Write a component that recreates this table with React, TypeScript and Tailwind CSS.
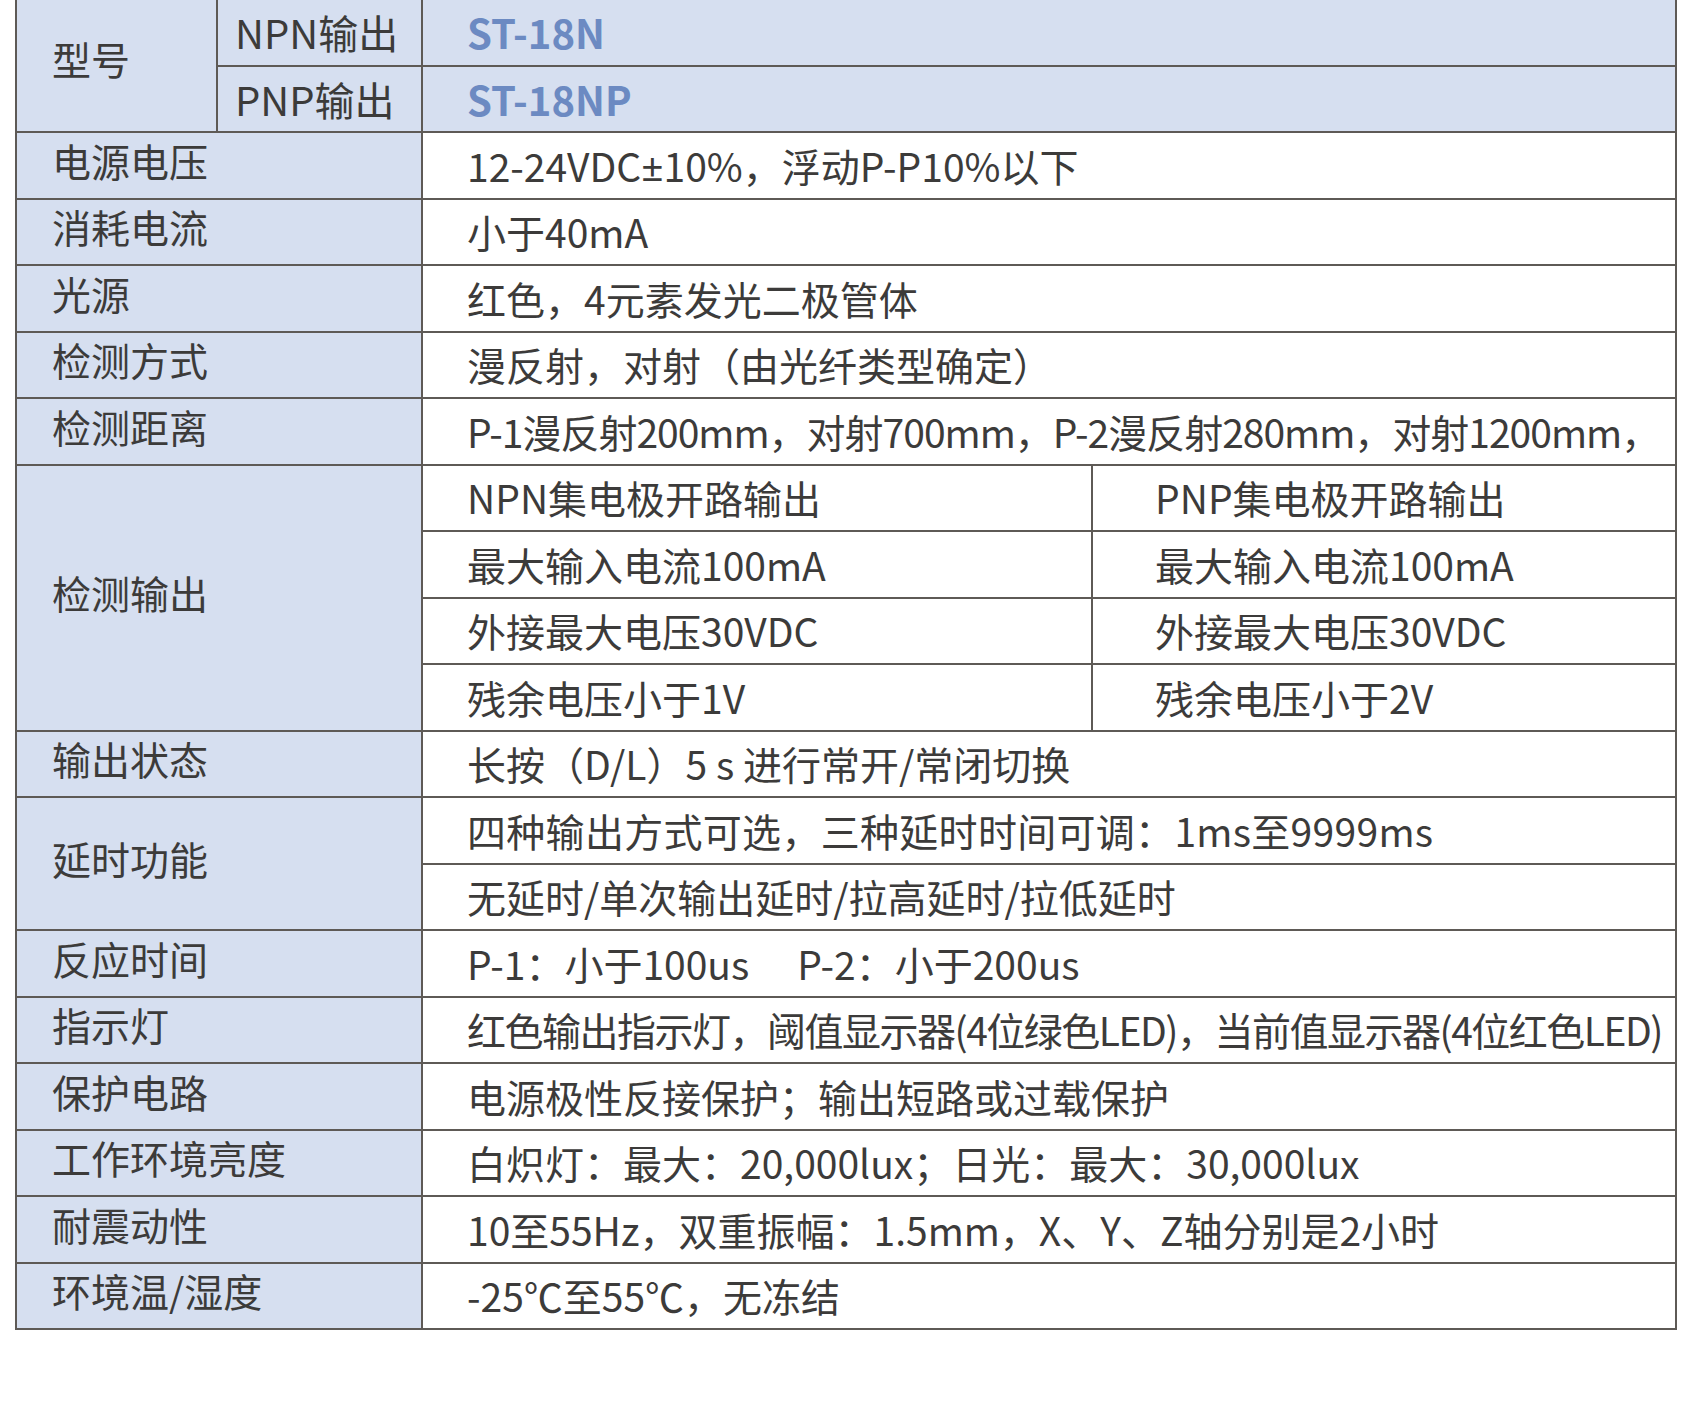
const line = 'border-[#5e5a56]';
const cellBase = `border-r-2 border-b-2 ${line} flex items-center`;

function Label({ text, span = 1 }: { text: string; span?: number }) {
  const rows: Record<number, string> = { 1: 'row-span-1', 2: 'row-span-2', 4: 'row-span-4' };
  return (
    <div className={`${cellBase} ${rows[span]} col-span-2 bg-[#d6dff0] pl-[35px] pb-[10px]`}>
      {text}
    </div>
  );
}

function Value({ children, wide = true, right = false }: { children: React.ReactNode; wide?: boolean; right?: boolean }) {
  return (
    <div
      className={`${cellBase} bg-white whitespace-nowrap overflow-hidden ${wide ? 'col-span-2' : ''} ${right ? 'pl-[62px]' : 'pl-[44px]'}`}
    >
      {children}
    </div>
  );
}

const simpleRows: [string, React.ReactNode][] = [
  ['电源电压', <>12-24VDC<span className="font-['Noto_Sans']">±</span>10%，浮动P-P10%以下</>],
  ['消耗电流', '小于40mA'],
  ['光源', '红色，4元素发光二极管体'],
  ['检测方式', '漫反射，对射（由光纤类型确定）'],
];

const outputRows: [string, string][] = [
  ['NPN集电极开路输出', 'PNP集电极开路输出'],
  ['最大输入电流100mA', '最大输入电流100mA'],
  ['外接最大电压30VDC', '外接最大电压30VDC'],
  ['残余电压小于1V', '残余电压小于2V'],
];

const tailRows: [string, string][] = [
  ['保护电路', '电源极性反接保护；输出短路或过载保护'],
  ['工作环境亮度', '白炽灯：最大：20,000lux；日光：最大：30,000lux'],
  ['耐震动性', '10至55Hz，双重振幅：1.5mm，X、Y、Z轴分别是2小时'],
  ['环境温/湿度', '-25℃至55℃，无冻结'],
];

export default function App() {
  return (
    <div
      className="w-[1696px] h-[1414px] bg-white overflow-hidden text-[#3c3b3a] text-[39px] leading-none"
      style={{ fontFamily: '"Noto Sans CJK SC", "Noto Sans", sans-serif' }}
    >
      <div className={`ml-[15px] -mt-[2px] w-[1662px] border-l-2 border-t-2 ${line} grid grid-cols-[201px_205px_670px_584px] auto-rows-[66.5px]`}>
        {/* model */}
        <div className={`${cellBase} row-span-2 bg-[#d6dff0] pl-[35px] pb-[14px]`}>型号</div>
        <div className={`${cellBase} bg-[#d6dff0] pl-[17px] text-[40px]`}>NPN输出</div>
        <div className={`${cellBase} col-span-2 bg-[#d6dff0] pl-[44px] text-[40px] font-semibold text-[#6c8ac2]`}>ST-18N</div>
        <div className={`${cellBase} bg-[#d6dff0] pl-[17px] text-[40px]`}>PNP输出</div>
        <div className={`${cellBase} col-span-2 bg-[#d6dff0] pl-[44px] text-[40px] font-semibold text-[#6c8ac2]`}>ST-18NP</div>

        {simpleRows.map(([k, v]) => (
          <div key={k} className="contents">
            <Label text={k} />
            <Value>{v}</Value>
          </div>
        ))}

        <Label text="检测距离" />
        <Value>
          <span className="tracking-[-1px]">P-1漫反射200mm，对射700mm，P-2漫反射280mm，对射1200mm，</span>
        </Value>

        <Label text="检测输出" span={4} />
        {outputRows.map(([a, b]) => (
          <div key={a} className="contents">
            <Value wide={false}>{a}</Value>
            <Value wide={false} right>{b}</Value>
          </div>
        ))}

        <Label text="输出状态" />
        <Value>长按（D/L）5 s 进行常开/常闭切换</Value>

        <Label text="延时功能" span={2} />
        <Value>
          <span className="tracking-[0.3px]">四种输出方式可选，三种延时时间可调：1ms至9999ms</span>
        </Value>
        <Value>无延时/单次输出延时/拉高延时/拉低延时</Value>

        <Label text="反应时间" />
        <Value>
          P-1：小于100us<span className="ml-[48px]">P-2：小于200us</span>
        </Value>

        <Label text="指示灯" />
        <Value>
          <span className="tracking-[-1.5px]">红色输出指示灯，阈值显示器(4位绿色LED)，当前值显示器(4位红色LED)</span>
        </Value>

        {tailRows.map(([k, v]) => (
          <div key={k} className="contents">
            <Label text={k} />
            <Value>{v}</Value>
          </div>
        ))}
      </div>
    </div>
  );
}
